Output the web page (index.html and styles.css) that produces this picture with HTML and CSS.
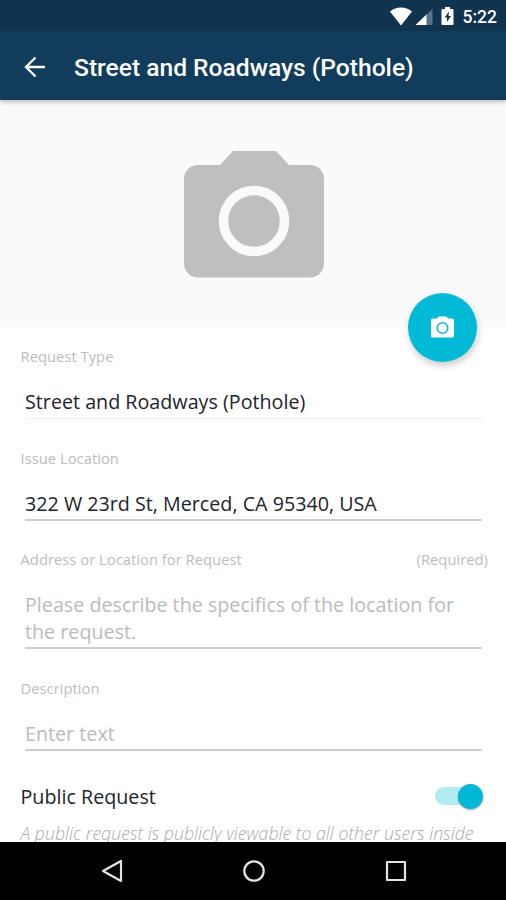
FILE: index.html
```html
<!DOCTYPE html>
<html lang="en">

<head>
    <meta charset="UTF-8">
    <meta name="viewport" content="width=device-width, initial-scale=1.0">
    <title>Street and Roadways (Pothole)</title>
    <link rel="stylesheet" href="styles.css">
</head>

<body>
    <div class="screen">
        <header class="app-header">
            <div class="status-bar">
                <svg width="68" height="20" viewBox="0 0 68 20">
                    <path fill="#fff" d="M0 4.600C6.200-.9 15.800-.9 22 4.600L11 18.500z" />
                    <path fill="#55728a" d="M42.500 2v16H25.500z" />
                    <path fill="#fff" d="M36.500 7.600V18H25.500z" />
                    <path fill="#fff" d="M55 0h5v2h2.500a1 1 0 0 1 1 1v14a1 1 0 0 1-1 1h-10a1 1 0 0 1-1-1V3a1 1 0 0 1 1-1H55z" />
                    <path fill="#10344f" d="M59 4.500l-4.500 6h2.500v4.500l4-6h-2.500z" />
                </svg>
                <span class="clock">5:22</span>
            </div>
            <div class="title-bar">
                <svg class="back" width="22" height="22" viewBox="0 0 22 22" fill="none" stroke="#fff" stroke-width="2.400">
                    <path d="M21 11H2.500M11.500 1.500L2 11l9.500 9.500" />
                </svg>
                <h1>Street and Roadways (Pothole)</h1>
            </div>
        </header>

        <div class="photo">
            <svg width="140" height="127" viewBox="0 0 140 127">
                <path fill="#c0bebf" d="M49 0h43l13 14h21a14 14 0 0 1 14 14v84.500a14 14 0 0 1-14 14H14a14 14 0 0 1-14-14V28a14 14 0 0 1 14-14h22z" />
                <circle cx="70" cy="70" r="30.500" fill="none" stroke="#fafafa" stroke-width="9.500" />
            </svg>
            <button class="fab" aria-label="Add photo">
                <svg width="23" height="22" viewBox="0 0 23 22">
                    <path fill="#fff" d="M7.500.5h8l1.500 2h4.500a1.500 1.500 0 0 1 1.500 1.500v16a1.500 1.500 0 0 1-1.500 1.500h-20A1.500 1.500 0 0 1 0 20V4a1.500 1.500 0 0 1 1.500-1.500H6z" />
                    <circle cx="11.500" cy="12" r="5.300" fill="none" stroke="#00bad6" stroke-width="1.500" />
                </svg>
            </button>
        </div>

        <main class="form">
            <div class="field readonly">
                <div class="label"><span>Request Type</span></div>
                <div class="value">Street and Roadways (Pothole)</div>
            </div>
            <div class="field">
                <div class="label"><span>Issue Location</span></div>
                <div class="value">322 W 23rd St, Merced, CA 95340, USA</div>
            </div>
            <div class="field">
                <div class="label"><span>Address or Location for Request</span><span>(Required)</span></div>
                <div class="value hint">Please describe the specifics of the location for<br>the request.</div>
            </div>
            <div class="field">
                <div class="label"><span>Description</span></div>
                <div class="value hint">Enter text</div>
            </div>
            <div class="public-row">
                <span>Public Request</span>
                <div class="switch"><div class="thumb"></div></div>
            </div>
            <p class="note">A public request is publicly viewable to all other users inside</p>
        </main>

        <nav class="nav-bar">
            <svg width="22" height="24" viewBox="0 0 22 24" fill="none" stroke="#e4e4e4" stroke-width="2.200" stroke-linejoin="round">
                <path d="M20 2v20L2 12z" />
            </svg>
            <svg width="22" height="24" viewBox="0 0 22 24" fill="none" stroke="#e4e4e4" stroke-width="2.200">
                <circle cx="11" cy="12" r="9.700" />
            </svg>
            <svg width="22" height="24" viewBox="0 0 22 24" fill="none" stroke="#e4e4e4" stroke-width="2.200" stroke-linejoin="round">
                <path d="M2 3h18v18H2z" />
            </svg>
        </nav>
    </div>
</body>

</html>
```

FILE: styles.css
```css
* {
    box-sizing: border-box;
}

body {
    margin: 0;
    font-family: "Open Sans", "Noto Sans", sans-serif;
    background: #fff;
}

.screen {
    display: flex;
    flex-direction: column;
    width: 506px;
    height: 900px;
    overflow: hidden;
}

/* Header */
.app-header {
    flex: none;
    height: 100px;
    background: #113c5b;
    color: #fff;
    font-family: Roboto, sans-serif;
    box-shadow: 0 1px 5px rgba(60, 30, 30, 0.4);
    z-index: 1;
}

.status-bar {
    display: flex;
    align-items: center;
    justify-content: flex-end;
    gap: 5px;
    height: 31px;
    padding: 2px 9px 0 0;
    background: #10344f;
}

.clock {
    font-size: 17.5px;
    font-weight: 500;
    line-height: 20px;
}

.title-bar {
    display: flex;
    align-items: center;
    height: 69px;
    padding: 3px 0 0 24px;
}

.back {
    margin-right: 28px;
}

h1 {
    margin: 0;
    font-size: 24.6px;
    font-weight: 500;
    white-space: nowrap;
}

/* Photo placeholder */
.photo {
    position: relative;
    flex: none;
    display: flex;
    justify-content: center;
    height: 227px;
    padding: 50.5px 0 0 1px;
    background: #fafafa;
}

.fab {
    position: absolute;
    right: 29px;
    bottom: -34.5px;
    display: flex;
    align-items: center;
    justify-content: center;
    width: 69px;
    height: 69px;
    padding: 0;
    border: 0;
    border-radius: 50%;
    background: #00bad6;
    box-shadow: 1px 4px 7px rgba(0, 0, 0, 0.2);
}

/* Form */
.form {
    flex: 1;
    min-height: 0;
    overflow: hidden;
    padding: 19px 18px 0 20.5px;
}

.field {
    margin-bottom: 28.5px;
}

.label {
    display: flex;
    justify-content: space-between;
    font-size: 14.8px;
    line-height: 20px;
    color: #bdbdbd;
}

.value {
    margin: 22px 6px 0 4.5px;
    padding-bottom: 2px;
    border-bottom: 2px solid #cfcfcf;
    font-size: 19.72px;
    line-height: 27px;
    color: #22242c;
    white-space: nowrap;
}

.readonly .value {
    padding-bottom: 3px;
    border-bottom: 1px solid #f0f0f0;
}

.value.hint {
    color: #bbb;
}

.public-row {
    display: flex;
    align-items: center;
    justify-content: space-between;
    height: 34px;
    padding-right: 5px;
    font-size: 19.72px;
    color: #22242c;
}

.switch {
    display: flex;
    align-items: center;
    justify-content: flex-end;
    width: 48px;
    height: 18px;
    border-radius: 9px;
    background: #b2ecf3;
}

.thumb {
    flex: none;
    width: 25px;
    height: 25px;
    border-radius: 50%;
    background: #00b8d4;
    box-shadow: 0 1px 2px rgba(0, 0, 0, 0.35);
}

.note {
    margin: 8px 0 0;
    font-size: 17.7px;
    font-style: italic;
    font-weight: 300;
    line-height: 24px;
    color: #aaa;
    white-space: nowrap;
}

/* Navigation bar */
.nav-bar {
    flex: none;
    display: flex;
    justify-content: center;
    gap: 120px;
    height: 58px;
    padding: 17px 0 0 1px;
    background: #000;
}
```
